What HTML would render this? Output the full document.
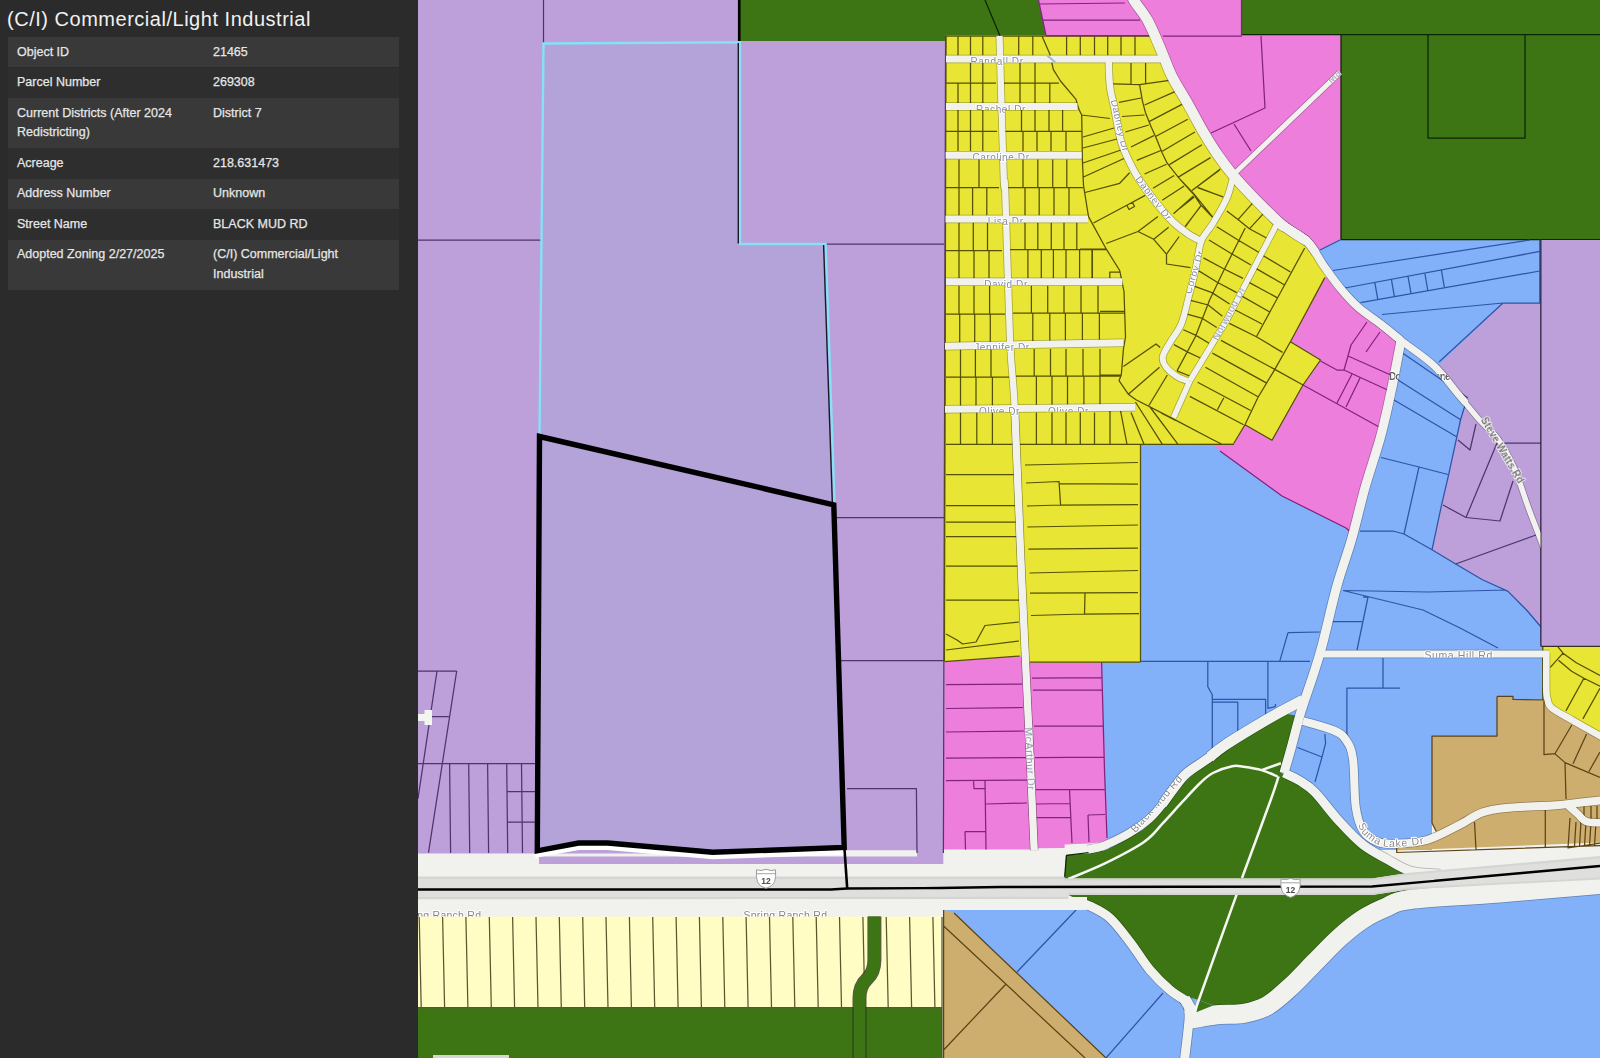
<!DOCTYPE html>
<html><head><meta charset="utf-8"><title>Zoning map</title>
<style>
html,body{margin:0;padding:0;}
body{width:1600px;height:1058px;overflow:hidden;position:relative;background:#2b2b2b;font-family:"Liberation Sans",sans-serif;}
#panel{position:absolute;left:0;top:0;width:418px;height:1058px;background:#2b2b2b;color:#e9e9e9;}
#title{position:absolute;left:7px;top:7px;font-size:20px;line-height:24px;color:#f1f1f1;white-space:nowrap;letter-spacing:0.52px}
.r{position:absolute;left:8px;width:391px;}
.r.a{background:#393939;}
.r.b{background:#2e2e2e;}
.k,.v{position:absolute;top:5.5px;font-size:12.5px;line-height:19.5px;color:#e6e6e6;white-space:nowrap;-webkit-text-stroke:0.25px #e6e6e6}
.k{left:9px;}
.v{left:205px;}
text{font-family:"Liberation Sans",sans-serif;}
</style></head><body>
<svg width="1600" height="1058" viewBox="0 0 1600 1058" style="position:absolute;left:0;top:0">
<defs>
<g id="roads" fill="none" stroke-linecap="butt" stroke-linejoin="round">
<path d="M1131.0 -6.0 C1131.7 -4.7 1132.2 -2.5 1135.0 2.0 C1137.8 6.5 1143.7 13.0 1148.0 21.0 C1152.3 29.0 1157.0 40.7 1161.0 50.0 C1165.0 59.3 1167.7 67.8 1172.2 76.8 C1176.7 85.8 1182.6 94.5 1187.8 103.7 C1193.0 112.9 1198.4 123.5 1203.4 132.0 C1208.4 140.5 1212.7 147.5 1217.6 154.7 C1222.5 161.9 1226.6 167.4 1233.0 175.0 C1239.4 182.6 1248.2 192.0 1256.0 200.0 C1263.8 208.0 1274.7 218.5 1279.5 223.0 C1284.3 227.5 1284.1 226.3 1285.0 227.0" stroke-width="10.3"/>
<path d="M1272.0 216.0 C1273.2 217.2 1276.0 220.2 1279.5 223.0 C1283.0 225.8 1288.4 229.4 1293.0 232.5 C1297.6 235.6 1304.7 239.9 1307.0 241.4" stroke-width="9.4"/>
<path d="M1285.0 227.0 C1286.3 227.9 1289.3 230.1 1293.0 232.5 C1296.7 234.9 1303.2 238.0 1307.0 241.4 C1310.8 244.8 1314.5 251.1 1316.0 253.0" stroke-width="8.6"/>
<path d="M1279.5 223.0 C1284.1 226.1 1299.6 234.2 1307.0 241.4 C1314.4 248.6 1318.3 258.4 1324.0 266.3 C1329.7 274.2 1335.3 282.2 1341.0 289.0 C1346.7 295.8 1351.5 301.3 1358.1 307.2 C1364.7 313.1 1373.6 318.6 1380.8 324.2 C1388.0 329.8 1397.6 337.8 1401.0 340.5" stroke-width="7.8"/>
<path d="M1380.8 324.2 C1384.2 326.9 1392.1 333.6 1401.0 340.5 C1409.9 347.4 1424.5 356.8 1434.0 365.7 C1443.5 374.6 1452.7 387.8 1458.0 394.0 C1463.3 400.2 1464.7 401.5 1466.0 403.0" stroke-width="7"/>
<path d="M1450.0 384.5 C1451.3 386.1 1453.0 388.0 1458.0 394.0 C1463.0 400.0 1473.3 413.0 1480.0 420.5 C1486.7 428.0 1492.3 431.1 1498.0 439.0 C1503.7 446.9 1508.9 456.1 1514.0 467.6 C1519.1 479.1 1523.8 495.1 1528.5 508.0 C1533.2 520.9 1538.6 533.8 1542.5 545.0 C1546.4 556.2 1550.4 570.0 1552.0 575.0" stroke-width="5.4"/>
<path d="M1401.0 340.5 C1399.4 348.7 1394.9 373.4 1391.5 389.5 C1388.1 405.6 1385.0 420.5 1380.5 437.0 C1376.0 453.5 1369.5 471.5 1364.7 488.7 C1359.9 505.9 1356.1 523.7 1351.4 540.0 C1346.7 556.3 1341.6 569.0 1336.7 586.7 C1331.8 604.4 1326.0 631.2 1322.0 646.0 C1318.0 660.8 1316.5 664.8 1313.0 675.7 C1309.5 686.6 1304.6 699.5 1301.0 711.4 C1297.4 723.3 1294.2 736.7 1291.4 747.0 C1288.6 757.3 1285.2 768.7 1284.0 773.0" stroke-width="9"/>
<path d="M1233.0 175.0 L1340.0 72.5" stroke-width="5"/>
<path d="M946.0 59.0 L1163.0 59.0" stroke-width="7"/>
<path d="M946.0 106.5 L1077.5 106.5" stroke-width="7"/>
<path d="M945.6 155.2 L1081.7 155.2" stroke-width="7"/>
<path d="M945.5 219.0 L1088.0 219.0" stroke-width="7"/>
<path d="M946.0 281.7 L1122.4 281.7" stroke-width="7"/>
<path d="M945.0 346.2 L1123.4 342.8" stroke-width="7"/>
<path d="M945.0 409.2 L1135.0 407.3" stroke-width="7"/>
<path d="M999.5 36.0 C1000.2 60.0 1002.8 154.3 1003.8 180.0 C1004.8 205.7 1004.2 163.3 1005.2 190.0 C1006.2 216.7 1008.4 303.7 1010.0 340.0 C1011.6 376.3 1012.8 369.7 1014.7 408.0 C1016.6 446.3 1018.6 509.7 1021.3 570.0 C1024.0 630.3 1028.5 723.3 1030.7 770.0 C1032.9 816.7 1033.6 836.9 1034.2 850.3" stroke-width="6.3"/>
<path d="M1014.7 408.0 C1015.0 414.5 1015.2 420.0 1016.3 447.0 C1017.4 474.0 1018.9 516.2 1021.3 570.0 C1023.7 623.8 1028.5 723.3 1030.7 770.0 C1032.9 816.7 1033.6 836.9 1034.2 850.3" stroke-width="7.2"/>
<path d="M1108.6 59.0 C1108.8 63.6 1109.0 78.6 1110.0 86.7 C1111.0 94.8 1112.7 99.4 1114.3 107.7 C1115.9 116.0 1118.2 129.2 1119.8 136.3 C1121.4 143.4 1121.2 143.5 1124.0 150.0 C1126.8 156.5 1131.8 167.2 1136.7 175.5 C1141.7 183.8 1147.8 192.0 1153.7 199.6 C1159.6 207.2 1166.3 215.2 1172.0 220.9 C1177.7 226.6 1182.9 230.2 1187.7 233.6 C1192.5 236.9 1198.8 239.8 1201.0 241.0" stroke-width="6.5"/>
<path d="M1233.0 177.0 C1232.0 180.6 1230.2 190.5 1226.8 198.3 C1223.4 206.1 1216.8 216.8 1212.6 223.9 C1208.3 231.0 1204.1 233.4 1201.3 240.9 C1198.5 248.4 1197.7 259.8 1195.6 269.2 C1193.5 278.6 1190.9 288.5 1188.5 297.6 C1186.1 306.7 1184.4 316.5 1181.3 324.0 C1178.2 331.5 1173.1 337.1 1170.0 342.5 C1166.9 347.9 1163.5 352.7 1162.8 356.7 C1162.1 360.7 1163.3 363.3 1165.7 366.6 C1168.1 369.9 1173.1 374.0 1177.0 376.5 C1180.9 379.0 1187.0 380.7 1189.0 381.5" stroke-width="6"/>
<path d="M1278.5 221.0 L1226.8 320.0 L1189.8 380.8" stroke-width="5.5"/>
<path d="M1189.8 380.8 L1173.5 417.6" stroke-width="5.5"/>
<path d="M1322.0 654.0 L1549.4 654.0" stroke-width="6.8"/>
<path d="M1546.3 653.8 C1546.3 659.8 1546.1 682.5 1546.3 690.0 C1546.5 697.5 1546.6 696.0 1547.5 699.0 C1548.4 702.0 1547.5 704.5 1551.7 708.0 C1555.9 711.5 1565.1 716.0 1572.5 720.3 C1579.9 724.6 1589.8 730.1 1596.0 733.6 C1602.2 737.1 1607.7 740.2 1610.0 741.5" stroke-width="6.6"/>
<path d="M1303.0 721.0 C1308.2 722.6 1326.8 727.3 1334.0 730.5 C1341.2 733.7 1342.8 735.2 1346.0 740.0 C1349.2 744.8 1351.4 747.9 1353.0 759.0 C1354.6 770.1 1354.0 794.8 1355.7 806.7 C1357.4 818.6 1359.3 824.6 1363.0 830.5 C1366.7 836.4 1372.5 839.8 1378.0 842.0 C1383.5 844.2 1387.8 843.9 1396.0 843.6 C1404.2 843.3 1416.7 843.0 1427.0 840.0 C1437.3 837.0 1448.8 830.3 1458.0 825.7 C1467.2 821.1 1474.0 815.6 1482.0 812.6 C1490.0 809.6 1493.9 809.1 1505.7 807.9 C1517.5 806.7 1541.1 806.3 1553.0 805.5 C1564.9 804.7 1568.3 803.9 1577.0 803.0 C1585.7 802.1 1600.3 800.5 1605.0 800.0" stroke-width="8"/>
<path d="M1566.0 803.5 C1567.9 805.2 1574.1 810.7 1577.5 813.7 C1580.9 816.7 1582.0 820.1 1586.6 821.6 C1591.2 823.1 1601.9 822.5 1605.0 822.7" stroke-width="7.5"/>
<path d="M1088.0 849.5 C1089.7 849.2 1094.8 848.3 1098.0 847.5 C1101.2 846.7 1101.7 846.9 1106.9 844.5 C1112.1 842.1 1122.3 837.4 1129.4 833.1 C1136.5 828.9 1143.8 823.8 1149.3 819.0 C1154.8 814.2 1158.1 809.7 1162.5 804.2 C1166.9 798.7 1171.7 791.3 1175.7 786.2 C1179.7 781.1 1180.6 778.4 1186.3 773.5 C1192.0 768.6 1203.5 761.8 1210.0 757.0 C1216.5 752.2 1222.8 746.9 1225.4 744.9" stroke-width="8"/>
<path d="M1162.5 804.2 C1164.7 801.2 1171.7 791.3 1175.7 786.2 C1179.7 781.1 1180.6 778.4 1186.3 773.5 C1192.0 768.6 1203.5 761.8 1210.0 757.0 C1216.5 752.2 1222.8 746.9 1225.4 744.9" stroke-width="9.3"/>
<path d="M1210.0 757.0 C1212.6 755.0 1215.3 751.5 1225.4 744.9 C1235.5 738.3 1259.4 724.0 1270.7 717.4 C1282.0 710.8 1288.0 707.9 1293.4 705.0 C1298.8 702.1 1301.4 700.8 1303.0 700.0" stroke-width="10.5"/>
<path d="M1284.0 773.0 C1286.7 774.3 1294.8 777.8 1300.0 781.0 C1305.2 784.2 1308.5 785.7 1315.0 792.4 C1321.5 799.1 1331.0 812.3 1339.0 821.0 C1347.0 829.7 1355.0 838.5 1363.0 844.8 C1371.0 851.1 1378.8 854.6 1386.7 859.0 C1394.6 863.4 1401.6 868.5 1410.5 871.0 C1419.4 873.5 1435.1 873.5 1440.0 874.0" stroke-width="9"/>
<path d="M1072.0 902.2 C1073.3 902.4 1077.0 902.9 1080.0 903.5 C1083.0 904.1 1085.0 903.6 1090.0 906.0 C1095.0 908.4 1103.3 912.0 1110.0 918.0 C1116.7 924.0 1123.3 933.3 1130.0 942.0 C1136.7 950.7 1143.3 962.0 1150.0 970.0 C1156.7 978.0 1163.7 984.7 1170.0 990.0 C1176.3 995.3 1185.0 1000.0 1188.0 1002.0" stroke-width="9"/>
<path d="M1188.0 1002.0 C1188.2 1005.0 1189.7 1009.7 1189.0 1020.0 C1188.3 1030.3 1184.8 1056.7 1184.0 1064.0" stroke-width="9"/>
<path d="M1184.5 998.5 L1192.5 1012" stroke-width="11"/>
<path d="M1186.0 1020.0 C1188.3 1019.6 1194.3 1018.4 1200.0 1017.5 C1205.7 1016.6 1212.7 1015.2 1220.0 1014.5 C1227.3 1013.8 1235.9 1014.9 1243.8 1013.4 C1251.7 1011.9 1259.7 1010.1 1267.6 1005.5 C1275.5 1000.9 1283.5 993.2 1291.4 986.0 C1299.3 978.8 1307.1 970.0 1315.0 962.0 C1322.9 954.0 1331.0 945.2 1339.0 938.0 C1347.0 930.8 1355.0 924.2 1363.0 919.0 C1371.0 913.8 1378.8 910.2 1386.7 907.0 C1394.6 903.8 1391.6 901.8 1410.5 899.5 C1429.4 897.2 1467.6 895.6 1500.0 893.0 C1532.4 890.4 1587.5 885.5 1605.0 884.0" stroke-width="19"/>
</g>
<mask id="roadmask" maskUnits="userSpaceOnUse" x="418" y="0" width="1182" height="1058">
<rect x="418" y="0" width="1182" height="1058" fill="#000"/>
<use href="#roads" stroke="#fff"/>
<rect x="418" y="850" width="650" height="66.5" fill="#fff"/>
</mask>
</defs>
<rect x="418" y="0" width="1182" height="1058" fill="#f1f1ee"/>
<polygon points="418.0,0.0 946.0,0.0 946.0,36.0 944.5,660.0 943.3,864.0 917.0,864.0 917.0,850.3 847.0,850.3 845.0,853.5 418.0,853.5" fill="#bd9fd9" />
<polygon points="539.0,856.5 917.5,856.5 917.5,864.0 539.0,864.0" fill="#bd9fd9" />
<polygon points="739.0,0.0 1038.5,0.0 1046.0,35.7 946.0,35.7 946.0,41.0 739.0,41.0" fill="#3d7515" />
<polygon points="1241.0,0.0 1600.0,0.0 1600.0,239.5 1341.0,239.5 1341.0,35.0 1241.0,35.0" fill="#3d7515" />
<polygon points="1140.0,240.0 1543.5,240.0 1543.5,700.0 1497.0,700.0 1497.0,736.0 1432.0,736.0 1432.0,850.0 1102.0,850.0 1102.0,662.0 1140.0,662.0" fill="#82b1fa" />
<polygon points="943.6,910.0 1100.0,910.0 1420.0,905.0 1600.0,893.0 1600.0,1058.0 943.6,1058.0" fill="#82b1fa" />
<polygon points="1038.5,0.0 1241.0,0.0 1241.0,35.0 1341.0,35.0 1341.0,239.5 1320.0,250.0 1307.0,241.4 1279.5,223.0 1256.0,200.0 1233.0,175.0 1217.6,154.7 1203.4,132.0 1187.8,103.7 1172.2,76.8 1161.0,50.0 1152.0,33.0 1046.0,35.7" fill="#ee7edc" />
<polygon points="1038.5,0.0 1135.0,0.0 1155.0,36.0 1046.0,35.7" fill="#ee7edc" />
<polygon points="946.0,35.7 1152.0,35.7 1161.0,50.0 1172.2,76.8 1187.8,103.7 1203.4,132.0 1217.6,154.7 1233.0,175.0 1256.0,200.0 1279.5,223.0 1307.0,241.4 1324.0,266.3 1331.0,276.0 1324.8,277.6 1290.4,341.8 1320.5,360.0 1303.0,385.0 1272.0,440.3 1245.0,424.7 1233.7,443.5 1140.0,444.3 1140.0,662.2 1030.0,662.2 1020.0,656.0 944.5,661.7" fill="#e8e535" />
<polygon points="1324.8,277.6 1331.0,276.0 1341.0,289.0 1358.1,307.2 1380.8,324.2 1401.0,340.5 1391.5,389.5 1380.5,437.0 1364.7,488.7 1351.4,540.0 1346.0,528.0 1282.0,496.0 1220.0,451.0 1212.0,444.3 1233.7,443.5 1245.0,424.7 1272.0,440.3 1303.0,385.0 1320.5,360.0 1290.4,341.8" fill="#ee7edc" />
<polygon points="944.5,661.7 1020.0,656.0 1030.0,662.2 1101.6,662.2 1104.3,740.0 1107.8,841.5 1089.7,843.6 1064.6,844.6 1064.6,848.0 1037.0,848.2 1037.0,849.6 943.5,849.6" fill="#ee7edc" />
<polygon points="1541.0,239.5 1600.0,239.5 1600.0,646.3 1541.0,646.3" fill="#bd9fd9" />
<polygon points="1439.0,365.0 1503.0,303.0 1541.0,303.0 1541.0,627.0 1527.0,610.5 1508.0,591.4 1482.0,579.5 1455.7,564.0 1432.0,549.8 1441.4,505.7 1448.6,474.8 1460.5,420.0 1466.0,402.0 1458.0,394.0" fill="#bd9fd9" />
<polygon points="1542.8,646.3 1600.0,646.3 1600.0,737.0 1572.5,720.3 1551.7,708.0 1546.0,698.0 1542.8,698.0" fill="#e8e535" />
<polygon points="1497.0,696.4 1513.0,696.4 1513.0,699.5 1546.0,700.0 1555.0,709.0 1575.0,723.0 1600.0,736.0 1600.0,842.5 1396.0,850.5 1396.0,844.0 1427.0,840.0 1436.0,831.0 1432.0,823.0 1432.0,736.0 1497.0,736.0" fill="#cdae6e" />
<polygon points="943.6,910.0 954.0,913.0 1106.0,1058.0 943.6,1058.0" fill="#cdae6e" />
<polygon points="418.0,916.5 942.0,916.5 942.0,1007.7 418.0,1007.7" fill="#fffcc4" />
<polygon points="418.0,1007.7 942.0,1007.7 942.0,1058.0 418.0,1058.0" fill="#3d7515" />
<polygon points="1064.6,878.5 1065.9,855.1 1089.7,853.2 1106.9,849.8 1124.1,840.6 1142.6,830.0 1155.9,818.1 1169.1,802.2 1180.0,786.5 1195.6,771.8 1214.0,759.4 1248.0,735.6 1284.3,713.4 1297.3,715.7 1287.0,747.0 1280.0,772.0 1304.7,787.3 1319.8,802.4 1340.0,823.2 1363.0,846.0 1386.7,860.0 1409.5,872.7 1372.0,878.5" fill="#3d7515" />
<polygon points="1068.4,895.0 1372.0,895.0 1408.0,889.5 1386.7,899.0 1363.0,910.8 1339.0,929.8 1315.0,953.6 1291.4,977.4 1267.6,996.5 1243.8,1004.8 1214.0,1005.5 1199.0,1000.0 1190.0,997.5 1170.0,986.0 1150.0,966.0 1129.0,937.7 1111.8,917.7 1093.0,906.4" fill="#3d7515" />
<g fill="none" stroke-width="1.25" stroke-linejoin="round">
<path d="M543.5 0.0 L543.5 43.0 M418.0 240.0 L541.0 240.0 M825.0 244.0 L944.0 244.0 M836.0 517.5 L944.0 517.5 M841.0 660.6 L944.0 660.6 M847.0 788.6 L916.4 788.6 L917.0 853.0 M945.6 36.0 L943.4 853.0 M418.0 671.0 L456.7 671.0 M437.0 671.0 L418.0 798.7 M456.7 671.0 L428.5 852.6 M431.7 716.5 L449.0 716.5 M418.0 763.5 L536.0 763.5 M449.6 763.5 L450.6 853.0 M468.7 763.5 L469.7 853.0 M487.6 763.5 L488.6 853.0 M506.7 763.5 L507.7 853.0 M521.5 763.5 L522.5 853.0 M506.7 791.7 L536.0 791.7 M507.0 822.0 L536.0 822.0 M1541.0 239.5 L1541.0 646.0 M1458.0 440.0 L1470.0 450.0 L1476.0 424.0 M1498.0 443.0 L1541.0 443.0 M1497.0 443.0 L1466.0 517.5 L1500.0 521.0 L1513.0 481.0 M1443.0 505.0 L1466.0 517.5 M1455.7 564.0 L1536.0 535.0" stroke="#4e356e"/>
<path d="M985.0 0.0 L1000.0 36.0 M1241.0 34.5 L1600.0 34.5 M1428.0 34.5 L1428.0 138.0 L1525.0 138.0 L1525.0 34.5 M1341.0 35.0 L1341.0 239.5 M1341.0 239.5 L1600.0 239.5 M739.5 0.0 L739.5 41.5 M1064.6 877.5 L1066.5 855.3 L1096.7 851.5" stroke="#0c2603"/>
<path d="M419.2 917.0 L421.2 1007.7 M442.6 917.0 L444.6 1007.7 M465.9 917.0 L467.9 1007.7 M489.3 917.0 L491.3 1007.7 M512.6 917.0 L514.6 1007.7 M536.0 917.0 L538.0 1007.7 M559.3 917.0 L561.3 1007.7 M582.7 917.0 L584.7 1007.7 M606.0 917.0 L608.0 1007.7 M629.4 917.0 L631.4 1007.7 M652.7 917.0 L654.7 1007.7 M676.1 917.0 L678.1 1007.7 M699.4 917.0 L701.4 1007.7 M722.8 917.0 L724.8 1007.7 M746.1 917.0 L748.1 1007.7 M769.5 917.0 L771.5 1007.7 M792.8 917.0 L794.8 1007.7 M816.2 917.0 L818.2 1007.7 M839.5 917.0 L841.5 1007.7 M862.9 917.0 L864.9 1007.7 M886.2 917.0 L888.2 1007.7 M909.6 917.0 L911.6 1007.7 M932.9 917.0 L934.9 1007.7 M418.0 1007.7 L942.0 1007.7 M942.0 917.0 L942.0 1058.0" stroke="#5a572e"/>
<path d="M946.0 36.0 L944.4 661.0 M946.0 36.0 L1152.0 36.0 M958.0 36.0 L958.0 55.5 M970.5 36.0 L970.5 55.5 M982.8 36.0 L982.8 55.5 M1018.7 36.0 L1018.7 55.5 M1032.8 36.0 L1032.8 55.5 M1066.6 36.0 L1066.6 55.5 M1080.3 36.0 L1080.3 55.5 M1094.5 36.0 L1094.5 55.5 M1107.7 36.0 L1107.7 55.5 M1121.0 36.0 L1121.0 55.5 M1135.0 36.0 L1135.0 55.5 M1042.0 36.0 L1049.8 54.0 L1053.4 69.7 L1060.5 81.0 L1076.0 99.4 L1078.9 109.4 L1081.7 115.0 L1082.4 160.0 L1083.5 185.4 L1088.5 216.6 L1105.5 247.8 L1119.7 270.5 L1124.0 291.7 L1125.5 336.8 L1123.4 349.5 L1121.3 375.0 L1119.0 380.7 L1128.3 394.2 L1136.0 399.8 L1170.9 417.6 L1213.4 440.0 L1222.0 444.3 M946.0 83.1 L996.0 83.1 M970.5 62.6 L970.5 83.1 M982.8 62.6 L982.8 83.1 M958.0 83.1 L958.0 103.0 M970.5 83.1 L970.5 103.0 M982.8 83.1 L982.8 103.0 M1003.0 83.1 L1059.0 83.1 M1020.0 62.6 L1020.0 103.0 M1035.0 62.6 L1035.0 103.0 M1049.8 83.1 L1049.8 103.0 M946.0 131.3 L997.0 131.3 M958.0 110.0 L958.0 151.0 M970.5 110.0 L970.5 151.0 M982.8 110.0 L982.8 151.0 M1004.0 131.3 L1082.0 131.3 M1021.5 110.0 L1021.5 131.3 M1035.0 110.0 L1035.0 131.3 M1049.0 110.0 L1049.0 131.3 M1062.6 110.0 L1062.6 131.3 M1023.0 131.3 L1023.0 151.0 M1037.0 131.3 L1037.0 151.0 M1051.0 131.3 L1051.0 151.0 M1066.0 131.3 L1066.0 151.0 M946.0 187.5 L999.0 187.5 M959.0 159.5 L959.0 187.5 M979.0 159.5 L979.0 187.5 M959.0 187.5 L959.0 215.5 M972.6 187.5 L972.6 215.5 M986.8 187.5 L986.8 215.5 M1007.0 187.5 L1083.0 187.5 M1023.0 159.5 L1023.0 187.5 M1037.8 159.5 L1037.8 187.5 M1052.7 159.5 L1052.7 187.5 M1066.8 159.5 L1066.8 187.5 M1025.0 187.5 L1025.0 215.5 M1039.2 187.5 L1039.2 215.5 M1054.0 187.5 L1054.0 215.5 M1069.0 187.5 L1069.0 215.5 M946.0 250.6 L1002.0 250.6 M959.0 222.5 L959.0 250.6 M973.3 222.5 L973.3 250.6 M987.5 222.5 L987.5 250.6 M959.0 250.6 L959.0 278.3 M974.0 250.6 L974.0 278.3 M989.0 250.6 L989.0 278.3 M1010.0 249.5 L1106.0 249.5 M1025.0 222.5 L1025.0 250.0 M1037.8 222.5 L1037.8 250.0 M1051.3 222.5 L1051.3 250.0 M1064.0 222.5 L1064.0 250.0 M1076.8 222.5 L1076.8 250.0 M1027.9 250.0 L1027.9 278.3 M1041.3 250.0 L1041.3 278.3 M1053.4 250.0 L1053.4 278.3 M1066.0 250.0 L1066.0 278.3 M1079.6 250.0 L1079.6 278.3 M1092.4 250.0 L1092.4 278.3 M1109.8 278.0 L1109.8 272.0 L1120.0 272.0 M946.0 314.0 L1005.0 314.0 M959.0 285.7 L959.0 314.0 M974.0 285.7 L974.0 314.0 M989.6 285.7 L989.6 314.0 M959.7 314.0 L959.7 342.4 M974.7 314.0 L974.7 342.4 M990.3 314.0 L990.3 342.4 M1013.0 313.0 L1125.0 313.0 M1031.4 285.7 L1031.4 313.5 M1047.7 285.7 L1047.7 313.5 M1064.0 285.7 L1064.0 313.5 M1081.0 285.7 L1081.0 313.5 M1098.0 285.7 L1098.0 313.5 M1032.8 313.5 L1032.8 341.5 M1049.8 313.5 L1049.8 341.5 M1065.4 313.5 L1065.4 341.5 M1082.4 313.5 L1082.4 341.5 M1099.4 313.5 L1099.4 341.5 M946.0 377.0 L1009.0 377.0 M960.5 349.5 L960.5 377.0 M975.4 349.5 L975.4 377.0 M991.0 349.5 L991.0 377.0 M960.5 377.0 L960.5 406.0 M976.0 377.0 L976.0 406.0 M992.4 377.0 L992.4 406.0 M1016.0 376.0 L1121.0 376.0 M1034.2 349.0 L1034.2 376.0 M1050.5 349.0 L1050.5 376.0 M1066.0 349.0 L1066.0 376.0 M1083.0 349.0 L1083.0 376.0 M1100.0 349.0 L1100.0 376.0 M1036.4 376.0 L1036.4 405.5 M1052.0 376.0 L1052.0 405.5 M1067.5 376.0 L1067.5 405.5 M1083.9 376.0 L1083.9 405.5 M1100.0 376.0 L1100.0 405.5 M946.0 444.3 L1234.0 444.3 M960.5 412.5 L960.5 444.3 M976.8 412.5 L976.8 444.3 M992.4 412.5 L992.4 444.3 M1036.4 412.5 L1036.4 444.3 M1052.0 412.5 L1052.0 444.3 M1066.0 412.5 L1066.0 444.3 M1080.3 412.5 L1080.3 444.3 M1094.5 412.5 L1094.5 444.3 M1110.0 410.5 L1110.0 444.3 M1120.5 410.5 L1127.0 444.3 M1131.0 412.6 L1144.0 444.3 M1135.4 402.0 L1162.4 444.3 M1150.0 407.0 L1178.0 444.3 M1140.5 444.3 L1140.5 662.0 M946.0 474.5 L1014.0 474.5 M946.0 505.5 L1016.0 505.5 M946.0 522.0 L1017.0 522.0 M946.0 536.5 L1018.0 536.5 M946.0 566.0 L1019.0 566.0 M946.0 600.0 L1021.0 600.0 M1025.0 465.0 L1138.0 462.5 M1026.0 483.0 L1059.0 481.5 L1060.6 505.0 L1027.0 506.0 M1059.0 483.5 L1138.0 484.0 M1060.0 505.0 L1138.0 504.5 M1027.5 527.0 L1138.0 525.0 M1028.5 549.0 L1138.0 548.0 M1029.5 573.0 L1138.0 570.5 M1030.0 593.0 L1138.0 592.5 M1031.0 615.5 L1084.5 614.0 L1085.0 593.5 M1084.5 614.0 L1139.0 613.5 M946.0 634.0 L957.0 640.0 L962.6 644.0 L976.0 642.0 L985.0 625.5 L1019.0 622.0 M946.0 650.0 L1019.0 641.0 M944.5 661.7 L1020.0 656.0 M1030.0 662.2 L1140.5 662.2 M1081.7 115.0 L1110.0 118.5 M1083.0 137.0 L1114.0 128.0 M1083.0 148.0 L1117.0 139.0 M1083.0 163.0 L1121.0 150.0 M1083.5 177.0 L1124.0 158.5 M1085.0 192.5 L1119.7 183.3 L1129.6 172.7 M1093.5 223.0 L1126.8 205.3 L1145.2 195.4 M1126.8 205.3 L1129.0 209.5 L1134.5 206.5 L1132.5 202.3 M1106.2 243.5 L1138.0 231.5 L1158.0 216.6 M1138.0 231.5 L1153.7 239.3 L1166.5 254.2 L1166.5 264.0 L1190.5 267.6 M1153.7 239.3 L1168.6 227.2 M1166.5 254.2 L1179.2 236.5 M1080.0 249.2 L1106.2 249.2 M1092.0 249.2 L1092.0 278.0 M1113.4 83.9 L1139.6 84.6 L1169.4 80.3 M1131.0 63.0 L1131.0 84.0 M1145.6 63.0 L1145.6 83.5 M1139.6 84.6 L1142.4 100.9 L1145.3 112.2 L1151.0 126.4 L1156.6 139.0 L1162.3 153.3 L1167.2 163.2 L1179.2 178.3 L1193.4 194.0 L1200.5 204.6 L1212.5 217.3 M1119.0 102.3 L1141.0 98.0 M1121.9 116.5 L1144.6 115.0 M1125.4 132.0 L1148.8 125.0 M1131.0 147.0 L1153.8 135.6 M1136.8 160.4 L1160.9 150.5 M1144.5 174.0 L1166.5 164.2 M1153.0 188.3 L1174.2 175.5 M1162.2 200.3 L1184.2 186.0 M1173.5 213.8 L1193.4 196.0 M1185.6 226.5 L1200.5 206.0 M1144.6 105.0 L1175.0 91.6 M1149.5 121.4 L1182.0 104.4 M1156.0 136.3 L1187.8 119.3 M1162.3 151.2 L1194.9 132.0 M1169.4 164.6 L1202.0 144.8 M1177.9 177.4 L1210.5 157.6 M1192.0 190.4 L1220.3 169.0 M1197.6 187.6 L1223.0 196.8 M1245.2 228.0 L1223.0 272.0 L1209.6 300.0 L1195.4 336.8 L1177.0 370.9 M1226.8 211.0 L1238.0 219.6 L1249.4 228.8 L1266.5 238.0 M1238.0 219.6 L1253.7 201.9 M1249.4 228.8 L1265.0 211.8 M1216.8 226.7 L1238.0 240.0 L1258.7 252.2 M1209.0 240.0 L1230.3 253.0 L1250.9 265.0 M1203.4 257.9 L1223.2 268.5 L1243.0 278.4 M1198.4 270.6 L1216.8 282.0 L1236.7 292.6 M1194.2 286.2 L1211.9 292.6 L1229.6 304.0 M1190.6 300.4 L1208.2 305.0 L1222.4 316.3 M1187.0 314.2 L1202.5 318.4 L1216.7 327.6 M1183.4 329.8 L1196.0 335.4 L1209.0 343.2 M1174.0 344.6 L1188.3 352.4 L1200.4 358.0 M1177.0 370.9 L1192.0 377.0 M1304.7 248.0 L1256.4 336.8 M1261.7 254.8 L1290.5 272.0 M1254.6 267.6 L1284.2 284.8 M1246.7 281.1 L1277.0 297.6 M1238.8 294.4 L1269.3 311.7 M1232.4 308.5 L1262.0 324.0 M1229.4 323.4 L1256.4 336.8 L1282.6 352.4 M1290.4 341.8 L1274.8 369.4 L1257.8 397.8 L1245.0 424.7 M1221.0 340.4 L1274.8 369.4 M1212.4 353.1 L1266.3 382.9 M1205.4 367.3 L1258.5 397.0 M1197.6 382.2 L1250.7 410.5 M1189.8 396.4 L1243.6 424.7 M1223.8 397.8 L1217.4 409.8 M1274.8 369.4 L1303.0 385.0 M1324.8 277.6 L1290.4 341.8 L1320.5 360.0 L1303.0 385.0 L1272.0 440.3 L1245.0 424.7 L1233.7 443.5 M1180.0 179.2 L1193.5 193.4 L1212.6 216.8 M1192.0 190.5 L1219.7 170.0 M1198.4 187.7 L1223.2 197.0 M1180.0 208.3 L1194.2 197.0 M1185.0 226.7 L1201.3 205.4 M1123.4 366.5 L1156.0 343.9 L1160.2 347.4 M1128.3 394.2 L1159.5 367.2 M1148.9 405.5 L1167.3 375.0 M1100.0 311.3 L1125.0 311.3 M1100.0 375.0 L1121.0 375.0 M1161.0 413.0 L1175.6 420.5 M1542.8 646.3 L1542.8 700.0 M1541.0 646.3 L1600.0 646.3 M1557.4 646.1 L1563.0 653.2 L1576.3 662.7 L1600.0 675.4 M1558.4 660.3 L1571.6 671.2 L1583.9 678.3 L1600.0 686.3 M1550.3 667.4 L1563.0 653.2 M1583.9 678.3 L1565.9 710.9 M1600.0 688.2 L1582.9 718.9" stroke="#545003"/>
<path d="M946.0 684.5 L1022.0 684.0 M946.0 708.5 L1023.0 707.5 M946.0 732.0 L1024.0 731.0 M946.0 758.0 L1026.0 757.5 M946.0 780.5 L1027.0 780.0 M1032.0 678.0 L1102.0 677.5 M1033.0 690.0 L1102.0 690.0 M1034.0 726.0 L1103.0 726.0 M1035.0 757.5 L1104.0 757.0 M1036.0 789.5 L1104.5 789.5 M1101.6 662.2 L1104.5 770.0 L1107.0 838.0 M973.5 781.0 L974.0 788.5 L985.0 788.5 M985.0 780.5 L986.0 849.5 M986.0 804.0 L1027.0 803.0 M965.0 831.5 L985.5 831.5 M965.0 831.5 L965.5 849.5 M1036.0 804.0 L1070.0 803.5 M1036.0 817.5 L1071.0 817.5 M1069.5 789.5 L1072.0 843.0 M1088.0 815.0 L1105.0 814.5 M1088.0 815.0 L1089.0 842.0 M1040.0 4.0 L1125.0 3.0 M1043.0 20.0 L1140.0 20.0 M1046.0 35.7 L1152.0 35.7 M1163.0 36.0 L1242.0 36.0 M1241.5 0.0 L1241.5 35.0 M1261.0 36.0 L1265.0 108.0 L1211.0 133.0 M1234.0 124.0 L1251.0 151.0 M1038.5 0.0 L1046.0 35.7 M1367.0 322.0 L1351.0 345.0 L1348.0 356.0 L1393.0 376.0 M1380.0 332.0 L1366.0 352.0 M1348.0 356.0 L1344.0 370.0 L1392.0 392.0 M1320.5 361.0 L1337.0 370.0 L1344.0 370.0 M1352.0 374.0 L1337.0 403.0 M1360.0 378.0 L1346.0 407.0 M1303.0 385.0 L1381.0 428.0 M1220.0 451.0 L1282.0 496.0 L1346.0 528.0 L1353.0 534.0" stroke="#80237f"/>
<path d="M1320.0 250.0 L1341.0 239.5 M1333.0 270.5 L1530.0 240.0 M1345.0 288.0 L1539.8 251.4 M1360.5 302.6 L1539.8 271.0 M1382.0 314.5 L1503.0 303.0 M1374.8 282.4 L1377.8 299.6 M1391.4 279.3 L1394.4 296.6 M1408.0 276.2 L1411.0 293.7 M1424.8 273.0 L1427.8 290.7 M1441.4 269.9 L1444.4 287.8 M1539.8 239.5 L1539.8 303.0 L1503.0 303.0 L1439.0 362.0 M1401.0 352.0 L1468.0 398.0 M1398.0 380.0 L1461.0 420.0 M1394.0 400.0 L1457.0 437.0 M1466.0 402.0 L1460.5 420.0 L1448.6 474.8 L1441.4 505.7 L1432.0 549.8 L1455.7 564.0 L1482.0 579.5 L1508.0 591.4 L1527.0 610.5 L1541.0 627.0 M1381.0 457.5 L1419.0 467.0 L1448.0 474.5 M1419.0 467.0 L1404.0 534.0 M1360.0 531.0 L1393.0 531.0 L1404.0 534.0 L1432.0 549.8 M1343.0 590.5 L1428.0 592.0 L1505.0 590.0 M1343.0 590.5 L1423.0 610.0 L1460.0 628.0 L1498.0 648.0 M1368.0 597.0 L1357.0 650.0 M1363.0 597.0 L1368.0 597.0 M1331.6 621.7 L1362.0 621.7 M1288.0 632.7 L1319.7 632.0 M1288.0 632.7 L1279.7 661.3 M1140.5 661.3 L1310.0 661.3 M1207.8 661.3 L1207.8 686.8 L1212.3 694.7 L1212.3 748.4 M1212.3 699.3 L1265.6 699.3 L1265.6 714.0 M1212.3 702.1 L1237.8 702.1 L1237.8 731.0 M1267.9 661.3 L1267.9 708.3 L1275.2 706.6 L1275.6 704.0 M1346.9 736.5 L1346.9 688.0 L1383.0 688.0 L1383.0 658.0 M1383.0 688.0 L1400.0 688.0 M1324.8 734.0 L1325.6 743.3 L1322.0 757.0 L1315.0 782.0 M1297.5 747.5 L1322.0 757.0 M1076.0 910.0 L1017.0 972.0 M1163.0 993.0 L1106.0 1058.0" stroke="#2d55a6"/>
<path d="M943.6 926.0 L1085.0 1058.0 M1006.0 984.0 L943.6 1050.0 M943.6 910.0 L943.6 1058.0 M954.0 913.0 L1106.0 1058.0 M1497.0 696.4 L1497.0 736.0 L1432.0 736.0 L1432.0 823.0 L1436.0 831.0 M1497.0 696.4 L1513.0 696.4 L1513.0 699.5 L1546.0 700.0 M1544.0 701.0 L1544.0 754.7 L1554.8 753.6 L1565.0 762.6 L1600.0 777.4 M1571.8 725.0 L1554.8 754.0 M1586.6 734.0 L1573.0 763.8 M1600.0 752.0 L1588.8 771.7 M1565.0 762.6 L1566.0 799.0 M1545.3 810.0 L1545.3 847.0 M1474.5 822.0 L1476.0 850.0 M1396.7 848.0 L1396.7 852.5 L1600.0 845.7 M1570.0 818.0 L1568.0 848.0 L1600.0 843.0 M1576.0 822.0 L1574.5 846.0 M1581.0 822.0 L1579.5 846.0 M1586.0 822.0 L1584.5 846.0 M1591.0 822.0 L1589.5 846.0 M1596.0 822.0 L1594.5 846.0 M1576.0 806.5 L1580.0 800.0 M1584.0 806.0 L1584.0 819.0 M1591.0 806.0 L1591.0 819.0 M1597.0 806.0 L1597.0 819.0" stroke="#5c4416"/>
</g>
<g id="casing" stroke="#000" stroke-opacity="0.28">
<path d="M1131.0 -6.0 C1131.7 -4.7 1132.2 -2.5 1135.0 2.0 C1137.8 6.5 1143.7 13.0 1148.0 21.0 C1152.3 29.0 1157.0 40.7 1161.0 50.0 C1165.0 59.3 1167.7 67.8 1172.2 76.8 C1176.7 85.8 1182.6 94.5 1187.8 103.7 C1193.0 112.9 1198.4 123.5 1203.4 132.0 C1208.4 140.5 1212.7 147.5 1217.6 154.7 C1222.5 161.9 1226.6 167.4 1233.0 175.0 C1239.4 182.6 1248.2 192.0 1256.0 200.0 C1263.8 208.0 1274.7 218.5 1279.5 223.0 C1284.3 227.5 1284.1 226.3 1285.0 227.0" stroke-width="11.8" fill="none"/>
<path d="M1272.0 216.0 C1273.2 217.2 1276.0 220.2 1279.5 223.0 C1283.0 225.8 1288.4 229.4 1293.0 232.5 C1297.6 235.6 1304.7 239.9 1307.0 241.4" stroke-width="10.9" fill="none"/>
<path d="M1285.0 227.0 C1286.3 227.9 1289.3 230.1 1293.0 232.5 C1296.7 234.9 1303.2 238.0 1307.0 241.4 C1310.8 244.8 1314.5 251.1 1316.0 253.0" stroke-width="10.1" fill="none"/>
<path d="M1279.5 223.0 C1284.1 226.1 1299.6 234.2 1307.0 241.4 C1314.4 248.6 1318.3 258.4 1324.0 266.3 C1329.7 274.2 1335.3 282.2 1341.0 289.0 C1346.7 295.8 1351.5 301.3 1358.1 307.2 C1364.7 313.1 1373.6 318.6 1380.8 324.2 C1388.0 329.8 1397.6 337.8 1401.0 340.5" stroke-width="9.3" fill="none"/>
<path d="M1380.8 324.2 C1384.2 326.9 1392.1 333.6 1401.0 340.5 C1409.9 347.4 1424.5 356.8 1434.0 365.7 C1443.5 374.6 1452.7 387.8 1458.0 394.0 C1463.3 400.2 1464.7 401.5 1466.0 403.0" stroke-width="8.5" fill="none"/>
<path d="M1450.0 384.5 C1451.3 386.1 1453.0 388.0 1458.0 394.0 C1463.0 400.0 1473.3 413.0 1480.0 420.5 C1486.7 428.0 1492.3 431.1 1498.0 439.0 C1503.7 446.9 1508.9 456.1 1514.0 467.6 C1519.1 479.1 1523.8 495.1 1528.5 508.0 C1533.2 520.9 1538.6 533.8 1542.5 545.0 C1546.4 556.2 1550.4 570.0 1552.0 575.0" stroke-width="6.9" fill="none"/>
<path d="M1401.0 340.5 C1399.4 348.7 1394.9 373.4 1391.5 389.5 C1388.1 405.6 1385.0 420.5 1380.5 437.0 C1376.0 453.5 1369.5 471.5 1364.7 488.7 C1359.9 505.9 1356.1 523.7 1351.4 540.0 C1346.7 556.3 1341.6 569.0 1336.7 586.7 C1331.8 604.4 1326.0 631.2 1322.0 646.0 C1318.0 660.8 1316.5 664.8 1313.0 675.7 C1309.5 686.6 1304.6 699.5 1301.0 711.4 C1297.4 723.3 1294.2 736.7 1291.4 747.0 C1288.6 757.3 1285.2 768.7 1284.0 773.0" stroke-width="10.5" fill="none"/>
<path d="M1233.0 175.0 L1340.0 72.5" stroke-width="6.5" fill="none"/>
<path d="M946.0 59.0 L1163.0 59.0" stroke-width="8.5" fill="none"/>
<path d="M946.0 106.5 L1077.5 106.5" stroke-width="8.5" fill="none"/>
<path d="M945.6 155.2 L1081.7 155.2" stroke-width="8.5" fill="none"/>
<path d="M945.5 219.0 L1088.0 219.0" stroke-width="8.5" fill="none"/>
<path d="M946.0 281.7 L1122.4 281.7" stroke-width="8.5" fill="none"/>
<path d="M945.0 346.2 L1123.4 342.8" stroke-width="8.5" fill="none"/>
<path d="M945.0 409.2 L1135.0 407.3" stroke-width="8.5" fill="none"/>
<path d="M999.5 36.0 C1000.2 60.0 1002.8 154.3 1003.8 180.0 C1004.8 205.7 1004.2 163.3 1005.2 190.0 C1006.2 216.7 1008.4 303.7 1010.0 340.0 C1011.6 376.3 1012.8 369.7 1014.7 408.0 C1016.6 446.3 1018.6 509.7 1021.3 570.0 C1024.0 630.3 1028.5 723.3 1030.7 770.0 C1032.9 816.7 1033.6 836.9 1034.2 850.3" stroke-width="7.8" fill="none"/>
<path d="M1014.7 408.0 C1015.0 414.5 1015.2 420.0 1016.3 447.0 C1017.4 474.0 1018.9 516.2 1021.3 570.0 C1023.7 623.8 1028.5 723.3 1030.7 770.0 C1032.9 816.7 1033.6 836.9 1034.2 850.3" stroke-width="8.7" fill="none"/>
<path d="M1108.6 59.0 C1108.8 63.6 1109.0 78.6 1110.0 86.7 C1111.0 94.8 1112.7 99.4 1114.3 107.7 C1115.9 116.0 1118.2 129.2 1119.8 136.3 C1121.4 143.4 1121.2 143.5 1124.0 150.0 C1126.8 156.5 1131.8 167.2 1136.7 175.5 C1141.7 183.8 1147.8 192.0 1153.7 199.6 C1159.6 207.2 1166.3 215.2 1172.0 220.9 C1177.7 226.6 1182.9 230.2 1187.7 233.6 C1192.5 236.9 1198.8 239.8 1201.0 241.0" stroke-width="8.0" fill="none"/>
<path d="M1233.0 177.0 C1232.0 180.6 1230.2 190.5 1226.8 198.3 C1223.4 206.1 1216.8 216.8 1212.6 223.9 C1208.3 231.0 1204.1 233.4 1201.3 240.9 C1198.5 248.4 1197.7 259.8 1195.6 269.2 C1193.5 278.6 1190.9 288.5 1188.5 297.6 C1186.1 306.7 1184.4 316.5 1181.3 324.0 C1178.2 331.5 1173.1 337.1 1170.0 342.5 C1166.9 347.9 1163.5 352.7 1162.8 356.7 C1162.1 360.7 1163.3 363.3 1165.7 366.6 C1168.1 369.9 1173.1 374.0 1177.0 376.5 C1180.9 379.0 1187.0 380.7 1189.0 381.5" stroke-width="7.5" fill="none"/>
<path d="M1278.5 221.0 L1226.8 320.0 L1189.8 380.8" stroke-width="7.0" fill="none"/>
<path d="M1189.8 380.8 L1173.5 417.6" stroke-width="7.0" fill="none"/>
<path d="M1322.0 654.0 L1549.4 654.0" stroke-width="8.3" fill="none"/>
<path d="M1546.3 653.8 C1546.3 659.8 1546.1 682.5 1546.3 690.0 C1546.5 697.5 1546.6 696.0 1547.5 699.0 C1548.4 702.0 1547.5 704.5 1551.7 708.0 C1555.9 711.5 1565.1 716.0 1572.5 720.3 C1579.9 724.6 1589.8 730.1 1596.0 733.6 C1602.2 737.1 1607.7 740.2 1610.0 741.5" stroke-width="8.1" fill="none"/>
<path d="M1303.0 721.0 C1308.2 722.6 1326.8 727.3 1334.0 730.5 C1341.2 733.7 1342.8 735.2 1346.0 740.0 C1349.2 744.8 1351.4 747.9 1353.0 759.0 C1354.6 770.1 1354.0 794.8 1355.7 806.7 C1357.4 818.6 1359.3 824.6 1363.0 830.5 C1366.7 836.4 1372.5 839.8 1378.0 842.0 C1383.5 844.2 1387.8 843.9 1396.0 843.6 C1404.2 843.3 1416.7 843.0 1427.0 840.0 C1437.3 837.0 1448.8 830.3 1458.0 825.7 C1467.2 821.1 1474.0 815.6 1482.0 812.6 C1490.0 809.6 1493.9 809.1 1505.7 807.9 C1517.5 806.7 1541.1 806.3 1553.0 805.5 C1564.9 804.7 1568.3 803.9 1577.0 803.0 C1585.7 802.1 1600.3 800.5 1605.0 800.0" stroke-width="9.5" fill="none"/>
<path d="M1566.0 803.5 C1567.9 805.2 1574.1 810.7 1577.5 813.7 C1580.9 816.7 1582.0 820.1 1586.6 821.6 C1591.2 823.1 1601.9 822.5 1605.0 822.7" stroke-width="9.0" fill="none"/>
<path d="M1088.0 849.5 C1089.7 849.2 1094.8 848.3 1098.0 847.5 C1101.2 846.7 1101.7 846.9 1106.9 844.5 C1112.1 842.1 1122.3 837.4 1129.4 833.1 C1136.5 828.9 1143.8 823.8 1149.3 819.0 C1154.8 814.2 1158.1 809.7 1162.5 804.2 C1166.9 798.7 1171.7 791.3 1175.7 786.2 C1179.7 781.1 1180.6 778.4 1186.3 773.5 C1192.0 768.6 1203.5 761.8 1210.0 757.0 C1216.5 752.2 1222.8 746.9 1225.4 744.9" stroke-width="9.5" fill="none"/>
<path d="M1162.5 804.2 C1164.7 801.2 1171.7 791.3 1175.7 786.2 C1179.7 781.1 1180.6 778.4 1186.3 773.5 C1192.0 768.6 1203.5 761.8 1210.0 757.0 C1216.5 752.2 1222.8 746.9 1225.4 744.9" stroke-width="10.8" fill="none"/>
<path d="M1210.0 757.0 C1212.6 755.0 1215.3 751.5 1225.4 744.9 C1235.5 738.3 1259.4 724.0 1270.7 717.4 C1282.0 710.8 1288.0 707.9 1293.4 705.0 C1298.8 702.1 1301.4 700.8 1303.0 700.0" stroke-width="12.0" fill="none"/>
<path d="M1284.0 773.0 C1286.7 774.3 1294.8 777.8 1300.0 781.0 C1305.2 784.2 1308.5 785.7 1315.0 792.4 C1321.5 799.1 1331.0 812.3 1339.0 821.0 C1347.0 829.7 1355.0 838.5 1363.0 844.8 C1371.0 851.1 1378.8 854.6 1386.7 859.0 C1394.6 863.4 1401.6 868.5 1410.5 871.0 C1419.4 873.5 1435.1 873.5 1440.0 874.0" stroke-width="10.5" fill="none"/>
<path d="M1072.0 902.2 C1073.3 902.4 1077.0 902.9 1080.0 903.5 C1083.0 904.1 1085.0 903.6 1090.0 906.0 C1095.0 908.4 1103.3 912.0 1110.0 918.0 C1116.7 924.0 1123.3 933.3 1130.0 942.0 C1136.7 950.7 1143.3 962.0 1150.0 970.0 C1156.7 978.0 1163.7 984.7 1170.0 990.0 C1176.3 995.3 1185.0 1000.0 1188.0 1002.0" stroke-width="10.5" fill="none"/>
<path d="M1188.0 1002.0 C1188.2 1005.0 1189.7 1009.7 1189.0 1020.0 C1188.3 1030.3 1184.8 1056.7 1184.0 1064.0" stroke-width="10.5" fill="none"/>
<path d="M1184.5 998.5 L1192.5 1012" stroke-width="12.5" fill="none"/>
<path d="M1186.0 1020.0 C1188.3 1019.6 1194.3 1018.4 1200.0 1017.5 C1205.7 1016.6 1212.7 1015.2 1220.0 1014.5 C1227.3 1013.8 1235.9 1014.9 1243.8 1013.4 C1251.7 1011.9 1259.7 1010.1 1267.6 1005.5 C1275.5 1000.9 1283.5 993.2 1291.4 986.0 C1299.3 978.8 1307.1 970.0 1315.0 962.0 C1322.9 954.0 1331.0 945.2 1339.0 938.0 C1347.0 930.8 1355.0 924.2 1363.0 919.0 C1371.0 913.8 1378.8 910.2 1386.7 907.0 C1394.6 903.8 1391.6 901.8 1410.5 899.5 C1429.4 897.2 1467.6 895.6 1500.0 893.0 C1532.4 890.4 1587.5 885.5 1605.0 884.0" stroke-width="20.5" fill="none"/>
</g>
<rect x="1040" y="897" width="47" height="12.8" fill="#f1f1ee"/>
<polygon points="1066,848.4 1100,846 1100,851 1066,853.2" fill="#f1f1ee"/>
<use href="#roads" stroke="#f1f1ee"/>
<polygon points="1199.3,1000.3 1213.0,1005.6 1196.3,1012.3" fill="#3d7515" />
<path d="M1068.4 879.0 C1074.7 876.3 1093.4 869.1 1106.0 862.9 C1118.6 856.7 1134.5 848.6 1144.0 842.0 C1153.5 835.4 1156.6 829.8 1162.9 823.2 C1169.2 816.6 1175.5 809.2 1181.8 802.4 C1188.1 795.6 1195.5 787.4 1200.7 782.5 C1205.9 777.6 1207.7 775.7 1212.9 773.0 C1218.2 770.3 1227.1 767.2 1232.2 766.2 C1237.3 765.2 1238.6 766.1 1243.5 766.7 C1248.4 767.4 1255.9 768.5 1261.6 770.1 C1267.3 771.7 1274.8 775.4 1277.5 776.4" fill="none" stroke="#f6f6f2" stroke-width="2.5"/>
<path d="M1278.6 776.4 C1277.3 780.3 1276.8 783.1 1270.7 800.0 C1264.6 816.9 1246.8 865.0 1242.0 878.0" fill="none" stroke="#f6f6f2" stroke-width="2.5"/>
<path d="M1236.6 894.6 C1230.3 912.2 1205.8 980.1 1198.8 1000.0 C1191.7 1019.9 1195.2 1011.7 1194.5 1014.0" fill="none" stroke="#f6f6f2" stroke-width="2.5"/>
<path d="M1261.6 770.1 L1280.9 763.3" fill="none" stroke="#f6f6f2" stroke-width="2.5"/>
<polygon points="418.0,876.5 1064.5,876.5 1064.5,878.5 1372.0,878.5 1409.5,872.7 1600.0,856.0 1600.0,879.5 1408.0,889.5 1372.0,895.0 1068.4,895.0 1068.4,899.0 418.0,899.2" fill="#d5d5d3"/>
<polygon points="418.0,879.0 1064.5,879.0 1064.5,880.5 1372.0,880.5 1409.5,874.7 1600.0,858.5 1600.0,877.5 1408.0,887.5 1372.0,893.0 1068.4,893.0 1068.4,896.8 418.0,897.0" fill="#dfdfdd"/>
<polygon points="1541.0,239.5 1600.0,239.5 1600.0,646.3 1541.0,646.3" fill="#bd9fd9" />
<path d="M1541 239.5V646.3H1600M1541 239.5H1600" fill="none" stroke="#000" stroke-opacity="0.7" stroke-width="1.05"/>
<path d="M874.4 916.5 L874.4 960 Q874.4 972 867 979 Q859.5 986 859.5 998 L859.5 1058" fill="none" stroke="#222" stroke-opacity="0.75" stroke-width="14"/>
<path d="M874.4 916.5 L874.4 960 Q874.4 972 867 979 Q859.5 986 859.5 998 L859.5 1058" fill="none" stroke="#3d7515" stroke-width="12"/>
<g mask="url(#roadmask)">
<path d="M1047 55.2 L1055.5 62.5" stroke="#9db9d8" stroke-width="1.8" fill="none"/>
<text x="1331.2" y="83.8" font-size="10" letter-spacing="0.6" font-weight="normal" fill="#8b8b8b" text-anchor="start" stroke="#fff" stroke-width="1.5" paint-order="stroke" stroke-linejoin="round" transform="rotate(-44.0 1331.2 83.8)">Martin Rd</text>
<text x="997.0" y="65.0" font-size="10" letter-spacing="0.6" font-weight="normal" fill="#858aa2" text-anchor="middle" stroke="#fff" stroke-width="2" paint-order="stroke" stroke-linejoin="round">Randall Dr</text>
<text x="1001.0" y="112.5" font-size="10" letter-spacing="0.6" font-weight="normal" fill="#858aa2" text-anchor="middle" stroke="#fff" stroke-width="2" paint-order="stroke" stroke-linejoin="round">Rachel Dr</text>
<text x="1001.0" y="161.0" font-size="10" letter-spacing="0.6" font-weight="normal" fill="#858aa2" text-anchor="middle" stroke="#fff" stroke-width="2" paint-order="stroke" stroke-linejoin="round">Caroline Dr</text>
<text x="1005.7" y="225.0" font-size="10" letter-spacing="0.6" font-weight="normal" fill="#858aa2" text-anchor="middle" stroke="#fff" stroke-width="2" paint-order="stroke" stroke-linejoin="round">Lisa Dr</text>
<text x="1006.0" y="288.0" font-size="10" letter-spacing="0.6" font-weight="normal" fill="#858aa2" text-anchor="middle" stroke="#fff" stroke-width="2" paint-order="stroke" stroke-linejoin="round">David Dr</text>
<text x="1002.0" y="351.0" font-size="10" letter-spacing="0.6" font-weight="normal" fill="#858aa2" text-anchor="middle" stroke="#fff" stroke-width="2" paint-order="stroke" stroke-linejoin="round">Jennifer Dr</text>
<text x="999.5" y="415.0" font-size="10" letter-spacing="0.6" font-weight="normal" fill="#858aa2" text-anchor="middle" stroke="#fff" stroke-width="2" paint-order="stroke" stroke-linejoin="round">Olive Dr</text>
<text x="1068.5" y="414.5" font-size="10" letter-spacing="0.6" font-weight="normal" fill="#858aa2" text-anchor="middle" stroke="#fff" stroke-width="2" paint-order="stroke" stroke-linejoin="round">Olive Dr</text>
<text x="1116.7" y="126.5" font-size="10" letter-spacing="0.6" font-weight="normal" fill="#858aa2" text-anchor="middle" stroke="#fff" stroke-width="2" paint-order="stroke" stroke-linejoin="round" transform="rotate(77.0 1116.7 126.5)">Dabney Dr</text>
<text x="1151.0" y="200.5" font-size="10" letter-spacing="0.6" font-weight="normal" fill="#858aa2" text-anchor="middle" stroke="#fff" stroke-width="2" paint-order="stroke" stroke-linejoin="round" transform="rotate(53.0 1151.0 200.5)">Dabney Dr</text>
<text x="1197.5" y="273.0" font-size="10" letter-spacing="0.6" font-weight="normal" fill="#858aa2" text-anchor="middle" stroke="#fff" stroke-width="2" paint-order="stroke" stroke-linejoin="round" transform="rotate(-73.0 1197.5 273.0)">Corby Dr</text>
<text x="1232.0" y="315.0" font-size="10" letter-spacing="0.6" font-weight="normal" fill="#858aa2" text-anchor="middle" stroke="#fff" stroke-width="2" paint-order="stroke" stroke-linejoin="round" transform="rotate(-62.0 1232.0 315.0)">Norwood Dr</text>
<text x="1026.0" y="759.0" font-size="10.5" letter-spacing="0.6" font-weight="normal" fill="#858aa2" text-anchor="middle" stroke="#fff" stroke-width="2" paint-order="stroke" stroke-linejoin="round" transform="rotate(87.5 1026.0 759.0)">McArthur Dr</text>
<text x="1159.2" y="806.2" font-size="10.5" letter-spacing="0.6" font-weight="normal" fill="#8b8b8b" text-anchor="middle" stroke="#fff" stroke-width="2" paint-order="stroke" stroke-linejoin="round" transform="rotate(-48.5 1159.2 806.2)">Black Mud Rd</text>
<text x="1458.7" y="658.5" font-size="10.5" letter-spacing="0.6" font-weight="normal" fill="#8b8b8b" text-anchor="middle" stroke="#fff" stroke-width="2" paint-order="stroke" stroke-linejoin="round">Suma Hill Rd</text>
<text x="1389" y="380.3" font-size="10" font-weight="bold" fill="#5c5c5c" textLength="61.5" stroke="#fff" stroke-width="2" paint-order="stroke">Dogwood Lane</text>
<text x="785.4" y="918.5" font-size="10.5" letter-spacing="0.25" font-weight="normal" fill="#848484" text-anchor="middle" stroke="#fff" stroke-width="2" paint-order="stroke" stroke-linejoin="round">Spring Ranch Rd</text>
<text x="439.4" y="918.5" font-size="10.5" letter-spacing="0.25" font-weight="normal" fill="#848484" text-anchor="middle" stroke="#fff" stroke-width="2" paint-order="stroke" stroke-linejoin="round">Spring Ranch Rd</text>
</g>
<text x="1499.5" y="452.0" font-size="10" letter-spacing="0.2" font-weight="bold" fill="#727272" text-anchor="middle" stroke="#fff" stroke-width="1.5" paint-order="stroke" stroke-linejoin="round" transform="rotate(59.5 1499.5 452.0)">Steve Watts Rd</text>
<path id="slk" d="M1357.0 822.0 C1358.0 824.0 1359.5 830.2 1363.0 834.0 C1366.5 837.8 1372.5 842.3 1378.0 844.5 C1383.5 846.7 1387.3 847.2 1396.0 847.0 C1404.7 846.8 1424.3 843.7 1430.0 843.0" fill="none"/>
<text font-size="10.5" letter-spacing="0.7" fill="#8b8b8b" stroke="#fff" stroke-width="2" paint-order="stroke"><textPath href="#slk" startOffset="3">Suma Lake Dr</textPath></text>
<path d="M418.0 889.5 L831.0 889.5 L847.0 888.5 L940.0 888.0 L1000.0 887.0 L1372.0 886.5 L1600.0 866.0" fill="none" stroke="#000" stroke-width="2.4"/>
<g transform="translate(766.0 878.3)"><path d="M-9.5 -8.5 Q-5 -6.8 0 -9 Q5 -6.8 9.5 -8.5 Q10.2 -1 8.6 3.2 Q6.6 8 0 10 Q-6.6 8 -8.6 3.2 Q-10.2 -1 -9.5 -8.5Z" fill="#fff" stroke="#9a9a9a" stroke-width="1"/><path d="M-9 -4.6H9" stroke="#9a9a9a" stroke-width="0.9"/><text x="0" y="5.6" font-size="8.5" font-weight="bold" fill="#4a4a4a" text-anchor="middle">12</text></g>
<g transform="translate(1290.5 887.4)"><path d="M-9.5 -8.5 Q-5 -6.8 0 -9 Q5 -6.8 9.5 -8.5 Q10.2 -1 8.6 3.2 Q6.6 8 0 10 Q-6.6 8 -8.6 3.2 Q-10.2 -1 -9.5 -8.5Z" fill="#fff" stroke="#9a9a9a" stroke-width="1"/><path d="M-9 -4.6H9" stroke="#9a9a9a" stroke-width="0.9"/><text x="0" y="5.6" font-size="8.5" font-weight="bold" fill="#4a4a4a" text-anchor="middle">12</text></g>
<path d="M739.2 0V41.5" stroke="#000" stroke-width="2.6" fill="none"/>
<path d="M418 714H424.5V710H432V725H424.5V721H418Z" fill="#f4f4f0"/>
<rect x="433" y="1055" width="76" height="3" fill="#d4d4d4"/>
<path d="M535.0 855.3 L578.6 847.5 L607.8 847.5 L712.7 856.7 L846.5 852.2" fill="none" stroke="#fff" stroke-width="5"/>
<polygon points="543.5,43.5 739.5,42.2 739.5,244.0 825.0,244.0 833.8,504.8 844.0,847.5 712.7,852.2 607.8,843.0 578.6,843.0 537.3,850.5 539.5,436.0" fill="#b3a3d8"/>
<path d="M539.5 436.0 L543.5 43.5 L740.0 42.2 L740.0 244.0 L825.6 244.0 L834.6 504.8" fill="none" stroke="#86e0f7" stroke-width="2.4"/>
<path d="M738.3 43V243.6M823.6 245L832.4 504" fill="none" stroke="#0a0a14" stroke-opacity="0.9" stroke-width="1.4"/>
<path d="M539.5 436.5 L833.8 504.8 L844.2 847.5 L712.7 852.2 L607.8 843.0 L578.6 843.0 L537.3 850.8 Z" fill="none" stroke="#000" stroke-width="5.4" stroke-linejoin="miter"/>
<path d="M844.4 847.5 L847.2 888.5" fill="none" stroke="#000" stroke-width="2.6"/>
</svg>
<div id="panel">
<div id="title">(C/I) Commercial/Light Industrial</div>
<div class="r a" style="top:37px;height:30px"><div class="k">Object ID</div><div class="v">21465</div></div>
<div class="r b" style="top:67.5px;height:30.5px"><div class="k">Parcel Number</div><div class="v">269308</div></div>
<div class="r a" style="top:98px;height:50px"><div class="k">Current Districts (After 2024<br>Redistricting)</div><div class="v">District 7</div></div>
<div class="r b" style="top:148px;height:30.5px"><div class="k">Acreage</div><div class="v">218.631473</div></div>
<div class="r a" style="top:178.5px;height:30.5px"><div class="k">Address Number</div><div class="v">Unknown</div></div>
<div class="r b" style="top:209px;height:30.5px"><div class="k">Street Name</div><div class="v">BLACK MUD RD</div></div>
<div class="r a" style="top:239.5px;height:50.5px"><div class="k">Adopted Zoning 2/27/2025</div><div class="v">(C/I) Commercial/Light<br>Industrial</div></div>
</div>
</body></html>
